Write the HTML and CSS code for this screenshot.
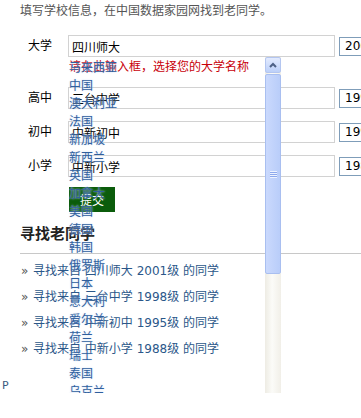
FILE: index.html
```html
<!DOCTYPE html>
<html lang="zh-CN">
<head>
    <meta charset="UTF-8">
    <meta name="viewport" content="width=device-width, initial-scale=1.0">
    <title>寻找老同学</title>
    <link rel="stylesheet" href="styles.css">
</head>
<body>
    <div class="page">
        <p class="intro">填写学校信息，在中国数据家园网找到老同学。</p>

        <form class="school-form">
            <div class="row first">
                <label>大学</label>
                <input type="text" class="school" value="四川师大">
                <select class="year"><option>2001</option></select>
            </div>
            <div class="hint">请在此输入框，选择您的大学名称</div>
            <div class="row">
                <label>高中</label>
                <input type="text" class="school" value="三台中学">
                <select class="year"><option>1998</option></select>
            </div>
            <div class="row">
                <label>初中</label>
                <input type="text" class="school" value="中新初中">
                <select class="year"><option>1995</option></select>
            </div>
            <div class="row">
                <label>小学</label>
                <input type="text" class="school" value="中新小学">
                <select class="year"><option>1988</option></select>
            </div>
            <button type="submit" class="submit">提交</button>

            <!-- autocomplete list, open over the form -->
            <div class="suggest">
                <ul>
                    <li>马来西亚</li>
                    <li>中国</li>
                    <li>澳大利亚</li>
                    <li>法国</li>
                    <li>新加坡</li>
                    <li>新西兰</li>
                    <li>英国</li>
                    <li>加拿大</li>
                    <li>美国</li>
                    <li>德国</li>
                    <li>韩国</li>
                    <li>俄罗斯</li>
                    <li>日本</li>
                    <li>意大利</li>
                    <li>爱尔兰</li>
                    <li>荷兰</li>
                    <li>瑞士</li>
                    <li>泰国</li>
                    <li>乌克兰</li>
                    <li>南非</li>
                </ul>
                <div class="scrollbar">
                    <div class="scroll-up">
                        <svg width="14" height="14" viewBox="0 0 14 14"><polyline points="4,9 7,6 10,9" fill="none" stroke="#4d6185" stroke-width="2"/></svg>
                    </div>
                    <div class="scroll-thumb"><span class="grip"></span></div>
                </div>
            </div>
        </form>

        <h2 class="section-title">寻找老同学</h2>
        <ul class="finds">
            <li><span class="arrow">»</span><a href="#">寻找来自 四川师大 2001级 的同学</a></li>
            <li><span class="arrow">»</span><a href="#">寻找来自 三台中学 1998级 的同学</a></li>
            <li><span class="arrow">»</span><a href="#">寻找来自 中新初中 1995级 的同学</a></li>
            <li><span class="arrow">»</span><a href="#">寻找来自 中新小学 1988级 的同学</a></li>
        </ul>
    </div>
    <div class="stray">P</div>
</body>
</html>
```

FILE: styles.css
```css
/* page */
body {
    margin: 0;
    font-family: "Noto Sans CJK SC", sans-serif;
    font-size: 12px;
    color: #000;
    background: #fff;
    overflow: hidden;
}

.page {
    width: 700px;
    padding-left: 20px;
}

.intro {
    margin: 0;
    padding-top: 3px;
    line-height: 14px;
    color: #555;
}

/* form */
.school-form {
    position: relative;
    margin-top: 18px;
}

.row {
    display: grid;
    grid-template-columns: 48px 267px 60px;
    align-items: center;
    margin-bottom: 12px;
}

.row.first {
    margin-bottom: 0;
}

.row label {
    padding-left: 8px;
    line-height: 16px;
    margin-top: -3px;
}

.school {
    box-sizing: border-box;
    height: 22px;
    margin: 0;
    padding: 0 3px;
    border: 1px solid #d2d2d2;
    font-family: "Noto Sans CJK SC", sans-serif;
    font-size: 12px;
    color: #000;
    background: #fff;
    outline: none;
}

.year {
    -webkit-appearance: none;
    appearance: none;
    box-sizing: border-box;
    height: 19px;
    margin: 0 0 0 4px;
    padding: 0 0 0 5px;
    border: 1px solid #7f9db9;
    border-radius: 0;
    font-family: "DejaVu Sans", sans-serif;
    font-size: 12px;
    color: #000;
    background: #fff;
}

.hint {
    height: 18px;
    line-height: 18px;
    padding-left: 49px;
    margin-bottom: 12px;
    color: #c8000a;
}

.submit {
    display: block;
    width: 46px;
    height: 25px;
    margin-left: 49px;
    margin-top: -2px;
    padding: 0;
    border: none;
    background: #0b5c0b;
    color: #fff;
    font-family: "Noto Sans CJK SC", sans-serif;
    font-size: 12px;
    cursor: pointer;
}

/* autocomplete dropdown */
.suggest {
    position: absolute;
    left: 48px;
    top: 22px;
    width: 213px;
    height: 361px;
    overflow: hidden;
}

.suggest ul {
    list-style: none;
    margin: 0;
    padding: 1px 0 0 1px;
    width: 196px;
}

.suggest li {
    height: 18px;
    line-height: 18px;
    color: #2f5f9e;
    text-shadow: 0 0 2px #c3d5f1;
}

.scrollbar {
    position: absolute;
    top: 0;
    right: 0;
    width: 16px;
    height: 100%;
    background: linear-gradient(to right, #eeece4, #fbfbf8 45%, #f1efe8);
}

.scroll-up {
    box-sizing: border-box;
    display: flex;
    justify-content: center;
    align-items: center;
    height: 16px;
    border: 1px solid #b4c6f0;
    border-radius: 2px;
    background: linear-gradient(#e3ebfe, #bcd0f9);
}

.scroll-thumb {
    box-sizing: border-box;
    display: flex;
    justify-content: center;
    align-items: center;
    height: 200px;
    margin-top: 1px;
    border: 1px solid #a9bff0;
    border-radius: 2px;
    background: linear-gradient(to right, #cad9fd, #b9cdf9);
}

.grip {
    width: 7px;
    height: 7px;
    background: repeating-linear-gradient(#eef3ff 0 1px, #8ea9ec 1px 2px);
}

/* list of finds */
.section-title {
    margin: 11px 0 0;
    padding-bottom: 10px;
    border-bottom: 1px solid #c8c8c8;
    font-size: 15px;
    line-height: 20px;
    font-weight: bold;
    color: #222;
}

.finds {
    list-style: none;
    margin: 4px 0 0;
    padding: 0;
}

.finds li {
    line-height: 26px;
    font-family: "DejaVu Sans", "Noto Sans CJK SC", sans-serif;
    font-size: 12px;
}

.finds .arrow {
    display: inline-block;
    width: 12px;
    padding-left: 1px;
    color: #555;
}

.finds a {
    color: #2b5789;
    text-decoration: none;
}

.stray {
    margin-top: 17px;
    padding-left: 2px;
    line-height: 14px;
    font-family: "DejaVu Sans", sans-serif;
    font-size: 11px;
    color: #3a5a80;
}
```
